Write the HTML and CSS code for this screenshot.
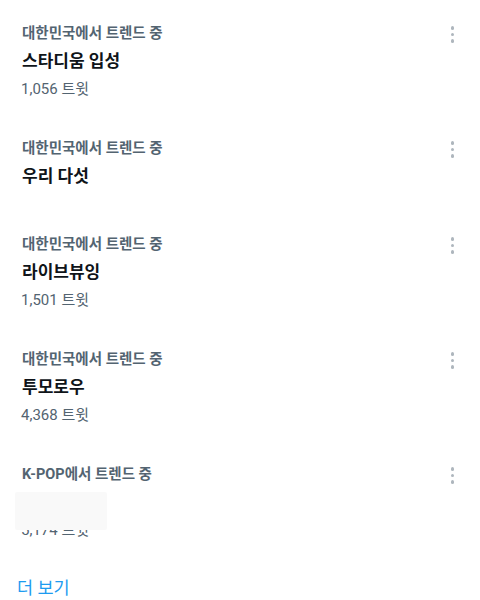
FILE: index.html
```html
<!DOCTYPE html>
<html lang="ko">
<head>
  <meta charset="UTF-8">
  <meta name="viewport" content="width=device-width, initial-scale=1.0">
  <title>트렌드</title>
  <link rel="stylesheet" href="styles.css">
</head>
<body>
  <main class="trends">
    <div class="trend">
      <div class="trend-body">
        <p class="trend-label">대한민국에서 트렌드 중</p>
        <p class="trend-title">스타디움 입성</p>
        <p class="trend-count">1,056 트윗</p>
      </div>
      <span class="more"><i></i><i></i><i></i></span>
    </div>
    <div class="trend">
      <div class="trend-body">
        <p class="trend-label">대한민국에서 트렌드 중</p>
        <p class="trend-title">우리 다섯</p>
      </div>
      <span class="more"><i></i><i></i><i></i></span>
    </div>
    <div class="trend">
      <div class="trend-body">
        <p class="trend-label">대한민국에서 트렌드 중</p>
        <p class="trend-title">라이브뷰잉</p>
        <p class="trend-count">1,501 트윗</p>
      </div>
      <span class="more"><i></i><i></i><i></i></span>
    </div>
    <div class="trend">
      <div class="trend-body">
        <p class="trend-label">대한민국에서 트렌드 중</p>
        <p class="trend-title">투모로우</p>
        <p class="trend-count">4,368 트윗</p>
      </div>
      <span class="more"><i></i><i></i><i></i></span>
    </div>
    <div class="trend">
      <div class="trend-body">
        <p class="trend-label">K-POP에서 트렌드 중</p>
        <p class="trend-title">&nbsp;</p>
        <p class="trend-count">5,174 트윗</p>
        <div class="blur-box"></div>
      </div>
      <span class="more"><i></i><i></i><i></i></span>
    </div>
  </main>
  <footer class="show-more">더 보기</footer>
</body>
</html>
```

FILE: styles.css
```css
/* 트렌드 목록 */
body {
  margin: 0;
  padding: 0;
  background: #fff;
  font-family: Roboto, "Noto Sans CJK KR", sans-serif;
}
.trend {
  display: flex;
  justify-content: space-between;
  align-items: flex-start;
  padding: 24px 17px 16px 22px;
}
.trend-body {
  position: relative;
}
.trend p {
  margin: 0;
}
.trend-label {
  font-size: 14.5px;
  line-height: 19px;
  font-weight: 700;
  color: #536471;
}
.trend-title {
  font-size: 17px;
  line-height: 21px;
  font-weight: 700;
  color: #0f1419;
  margin: 8px 0 !important;
}
.trend-count {
  font-size: 15px;
  line-height: 19px;
  color: #536471;
  margin-left: -1px !important;
}
.more {
  display: flex;
  flex-direction: column;
  gap: 3px;
  margin-top: 2px;
  padding: 0 9px;
}
.more i {
  width: 3.5px;
  height: 3.5px;
  border-radius: 50%;
  background: #aeb6bd;
}
.blur-box {
  position: absolute;
  left: -7px;
  top: 27px;
  width: 92px;
  height: 38px;
  background: #f9f9f9;
  border-radius: 2px;
}
.show-more {
  padding: 22px 17px 0;
  font-size: 17.5px;
  line-height: 20px;
  color: #1d9bf0;
}
```
